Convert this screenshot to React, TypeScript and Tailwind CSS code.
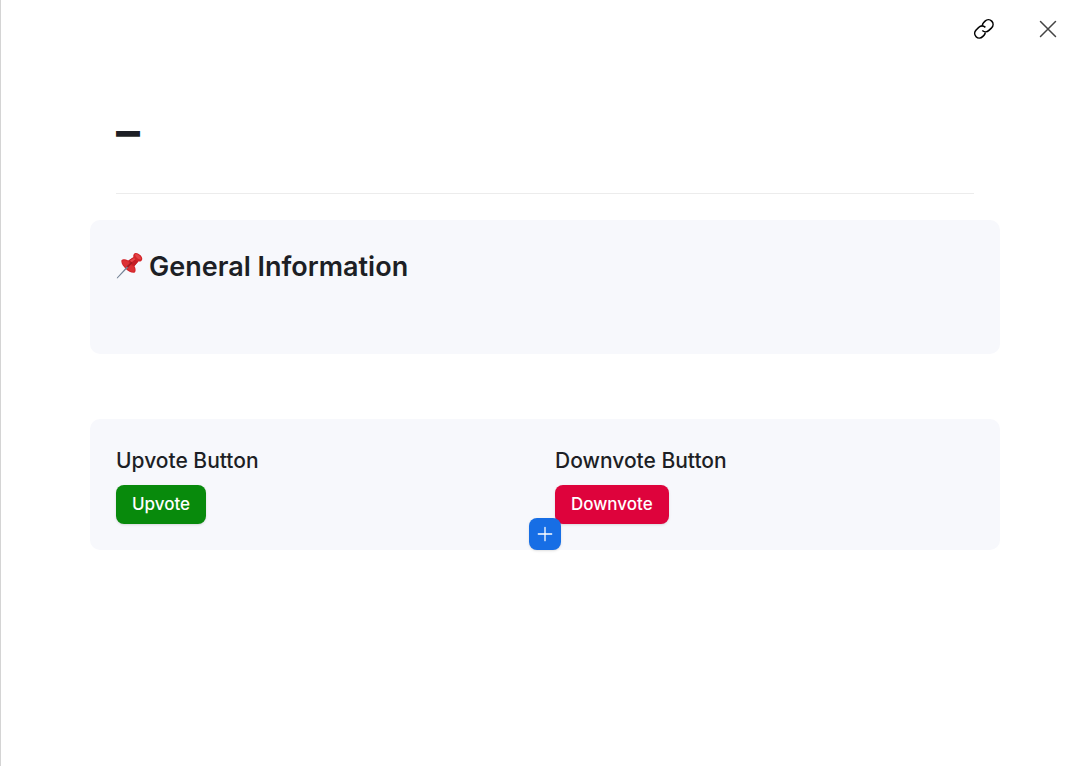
import React from 'react';

const LinkIcon: React.FC = () => (
  <svg width="22" height="22" viewBox="0 0 22 22" fill="none" stroke="currentColor" strokeWidth="1.6" strokeLinecap="butt" strokeLinejoin="round">
    <path d="M9.4 7.4C9.4 6.3 9.9 5.3 10.7 4.5L12 3.2C13.9 1.4 16.9 1.3 18.7 3.1C20.5 4.9 20.4 7.9 18.6 9.8L15.9 12.4C14 14.2 11.1 14.2 9.3 12.5" />
    <path d="M12.4 9.3C10.4 7.6 7.5 7.7 5.6 9.5L3.1 12C1.3 13.9 1.2 16.8 3.1 18.7C4.9 20.5 7.8 20.4 9.6 18.6L10.9 17.4C11.7 16.6 12.2 15.6 12.2 14.6" />
  </svg>
);

const CloseIcon: React.FC = () => (
  <svg width="18" height="18" viewBox="0 0 18 18" fill="none" stroke="currentColor" strokeWidth="1.5" strokeLinecap="round">
    <path d="M1.5 1.5L16.5 16.5M16.5 1.5L1.5 16.5" />
  </svg>
);

const PushpinIcon: React.FC = () => (
  <svg width="27" height="27" viewBox="0 0 27 27" className="mb-1" aria-hidden="true">
    <path d="M5.4 8.6C5.8 7 8.6 6.5 12.4 8.6L17.4 5.2C16.8 3 17.9 1.2 19.6 0.9C22.6 0.7 26.2 3.9 26.3 7C26.1 8.9 24.4 10 22.3 9.5L18.5 14C20 16.8 20 19.6 18.4 20.7C16 21.3 12.3 19.5 9.8 17C7.2 14.5 4.9 11.1 5.4 8.6Z" fill="#d3252a" />
    <path d="M17.4 5.2C18.2 7.2 20.2 9 22.3 9.5L18.5 14C16.2 13 13.6 10.8 12.4 8.6Z" fill="#c51e25" />
    <path d="M14 8.6L18 5.9L19.3 7.3L15.7 10.3Z" fill="#e8484b" />
    <path d="M19.2 2.2C21.2 1.2 25.3 4.9 25 7.2C23.2 8.7 18.2 4.2 19.2 2.2Z" fill="#e34447" />
    <path d="M6.2 9.2C7.6 7.8 10.4 8.6 12.6 9.9C13.9 12.2 15.4 13.6 17.4 14.6C18.7 16.7 19 18.9 17.8 19.7C15.6 20 12.7 18.2 10.5 16C8.3 13.8 5.9 11.2 6.2 9.2Z" fill="#dc3034" />
    <path d="M10.4 14.4L15.4 9.8L16.6 11L11.8 15.8Z" fill="#a31b22" />
    <path d="M10.9 14.4L12 15.5L1.6 26.2L0.8 26.4L1 25.6Z" fill="#738295" />
  </svg>
);

const PlusIcon: React.FC = () => (
  <svg width="16" height="16" viewBox="0 0 16 16" fill="none" stroke="currentColor" strokeWidth="1.3" strokeLinecap="round">
    <path d="M8 1.3V14.7M1.3 8H14.7" />
  </svg>
);

const votes = [
  { label: 'Upvote Button', action: 'Upvote', color: 'bg-[#088a0c]' },
  { label: 'Downvote Button', action: 'Downvote', color: 'bg-[#de033c]' },
];

const App: React.FC = () => {
  return (
    <div className="min-h-screen bg-white border-l border-[#d4d4d4] font-['Inter',sans-serif] text-[#1d1f25]">
      <header className="flex justify-end items-center gap-8 h-[58px] pr-[18px]">
        <button type="button" aria-label="Copy link" className="size-8 flex items-center justify-center text-black">
          <LinkIcon />
        </button>
        <button type="button" aria-label="Close" className="size-8 flex items-center justify-center text-[#444444]">
          <CloseIcon />
        </button>
      </header>

      <main className="pl-[89px] pr-[82px]">
        <div className="mx-[26px] pt-[45px] pb-[35px] border-b border-[#ececec]">
          <h1 className="text-5xl leading-[55px] font-bold">–</h1>
        </div>

        <section className="mt-[26px] rounded-[10px] bg-[#f7f8fc] px-[26px] pt-[27px] pb-[67px]">
          <h2 className="flex items-center gap-[6px] text-[27px] leading-10 font-semibold">
            <PushpinIcon />
            General Information
          </h2>
        </section>

        <section className="relative mt-[65px] rounded-[10px] bg-[#f7f8fc] p-[26px]">
          <div className="grid grid-cols-2 gap-5">
            {votes.map((vote) => (
              <div key={vote.action}>
                <p className="text-[21px] leading-8 font-medium">{vote.label}</p>
                <button
                  type="button"
                  className={`mt-2 h-[39px] rounded-lg px-4 text-[17px] font-medium text-white shadow-sm ${vote.color}`}
                >
                  {vote.action}
                </button>
              </div>
            ))}
          </div>
          {/* add-block handle, centred on the bottom edge */}
          <button
            type="button"
            aria-label="Add"
            className="absolute bottom-0 left-1/2 -translate-x-1/2 size-8 flex items-center justify-center rounded-lg bg-[#176ee5] text-white shadow-sm"
          >
            <PlusIcon />
          </button>
        </section>
      </main>
    </div>
  );
};

export default App;
